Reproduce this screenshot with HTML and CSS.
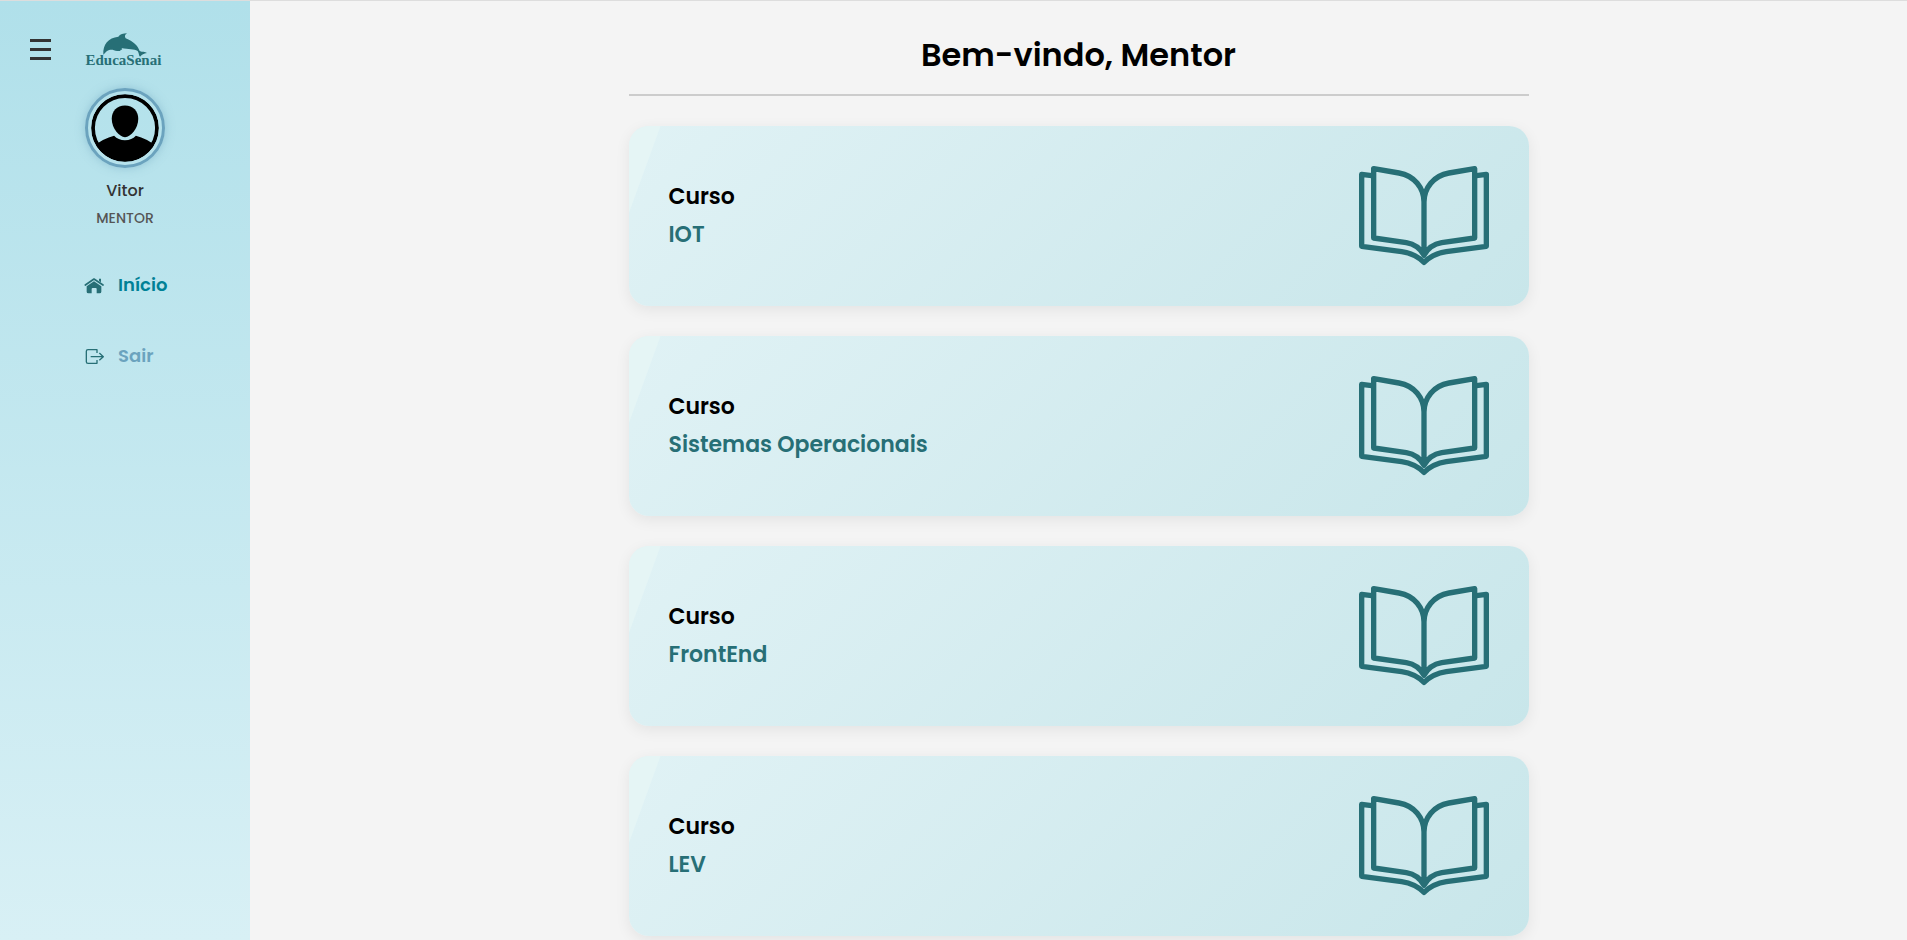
FILE: index.html
```html
<!DOCTYPE html>
<html lang="pt-BR">
<head>
<meta charset="utf-8">
<meta name="viewport" content="width=device-width, initial-scale=1">
<title>EducaSenai</title>
<link rel="stylesheet" href="styles.css">
</head>
<body>
<svg class="sprite" aria-hidden="true">
  <symbol id="book" viewBox="84 168 390 300">
    <g fill="none" stroke="currentColor" stroke-width="16" stroke-linejoin="round">
      <path d="M122 197 92 193V409L212 425Q252 431 279 457Q306 431 346 425L466 409V193L436 197"/>
      <path d="M279 436Q262 404 226 398L128 384V176L204 189C250 197 279 234 279 276C279 234 308 197 354 189L431 176V384L332 398Q296 404 279 436ZV260"/>
    </g>
  </symbol>
</svg>
<div class="layout">
  <aside class="sidebar">
    <header class="brand">
      <button class="menu" type="button" aria-label="Menu"><span></span><span></span><span></span></button>
      <a class="logo" href="#">
        <svg class="dolphin" viewBox="258 98 225 72" aria-hidden="true"><path fill="currentColor" d="M310 163C308 132 325 112 355 109C360 102 370 99 381 99C373 104 374 109 377 114C400 123 413 136 419 152C427 156 435 153 441 158C431 160 426 162 420 169C415 164 418 159 413 152C402 146 386 147 364 143C369 147 366 149 361 149C366 154 346 153 338 148C324 147 319 153 310 163Z"/></svg>
        <span>EducaSenai</span>
      </a>
    </header>
    <section class="profile">
      <svg class="avatar" viewBox="0 0 200 200" role="img" aria-label="Foto de perfil">
        <defs><clipPath id="face"><circle cx="100" cy="100" r="98"/></clipPath></defs>
        <circle cx="100" cy="100" r="94" fill="none" stroke="#000" stroke-width="11"/>
        <path d="M100 34C124 34 139 50 139 73C139 101 117 127 100 127C83 127 61 101 61 73C61 50 76 34 100 34Z"/>
        <path clip-path="url(#face)" d="M8 154Q36 131 68 123Q80 136 100 136Q120 136 132 123Q164 131 192 154V200H8Z"/>
      </svg>
      <p class="name">Vitor</p>
      <p class="role">MENTOR</p>
    </section>
    <nav class="nav">
      <a class="active" href="#">
        <svg viewBox="72 50 60 60" aria-hidden="true"><path d="M76 77 102 59 129 77" fill="none" stroke="currentColor" stroke-width="5" stroke-linecap="round" stroke-linejoin="round"/><path fill="currentColor" d="M117 58H123V69L117 65ZM80 81 102 66 124 81V97Q124 102 119 102H110V89Q110 86 107 86H98Q95 86 95 89V102H85Q80 102 80 97Z"/></svg>
        <span>Início</span>
      </a>
      <a href="#">
        <svg viewBox="73 261 60 60" aria-hidden="true"><path d="M112 279V269H85Q80 269 80 274V305Q80 310 85 310H112V300M93 290H131M119 279 131 290 119 301" fill="none" stroke="currentColor" stroke-width="4" stroke-linejoin="round"/></svg>
        <span>Sair</span>
      </a>
    </nav>
  </aside>
  <main class="content">
    <div class="courses">
      <h1>Bem-vindo, Mentor</h1>
      <a class="card" href="#"><h2>Curso<span>IOT</span></h2><svg class="book" aria-hidden="true"><use href="#book"/></svg></a>
      <a class="card" href="#"><h2>Curso<span>Sistemas Operacionais</span></h2><svg class="book" aria-hidden="true"><use href="#book"/></svg></a>
      <a class="card" href="#"><h2>Curso<span>FrontEnd</span></h2><svg class="book" aria-hidden="true"><use href="#book"/></svg></a>
      <a class="card" href="#"><h2>Curso<span>LEV</span></h2><svg class="book" aria-hidden="true"><use href="#book"/></svg></a>
    </div>
  </main>
</div>
</body>
</html>
```
FILE: styles.css
```css
* { box-sizing: border-box; margin: 0; padding: 0; }

body {
  border-top: 1px solid #ddd;
  background: #f4f4f4;
  color: #000;
  font-family: Poppins, Inter, "Open Sans", sans-serif;
}

a { color: inherit; text-decoration: none; }
.sprite { display: none; }

.layout { display: flex; min-height: calc(100vh - 1px); }

.sidebar {
  flex: 0 0 250px;
  background: linear-gradient(180deg, #b0e0ea, #d8f0f5);
}

.brand {
  display: grid;
  grid-template-columns: 1fr auto 1fr;
  padding: 32px 34px 0 30px;
}

.menu {
  display: flex;
  flex-direction: column;
  gap: 6px;
  width: 21px;
  padding-top: 6px;
  border: 0;
  background: none;
  cursor: pointer;
}
.menu span { width: 21px; height: 3px; background: #333; }

.logo {
  display: flex;
  flex-direction: column;
  width: 75px;
  color: #276f76;
  font: bold 15px/16px "Liberation Serif", serif;
}
.dolphin { display: block; width: 75px; height: 24px; margin-bottom: -5px; }

.profile {
  display: flex;
  flex-direction: column;
  align-items: center;
  padding-top: 20px;
  text-align: center;
}
.avatar {
  width: 80px;
  height: 80px;
  padding: 3px;
  border: 3px solid #6ba3be;
  border-radius: 50%;
  box-shadow: 0 0 10px rgba(107, 163, 190, 0.5);
}
.name { margin-top: 11px; color: #333; font-size: 16px; font-weight: 500; line-height: 24px; }
.role { margin-top: 5px; color: #555; font-size: 14px; font-weight: 500; line-height: 20px; }

.nav {
  display: flex;
  flex-direction: column;
  gap: 44px;
  padding: 43px 0 0 84px;
}
.nav a {
  display: flex;
  align-items: center;
  gap: 14px;
  color: #6ba3be;
  font-size: 18px;
  font-weight: 600;
  line-height: 27px;
}
.nav svg { width: 20px; height: 20px; margin-top: 2px; color: #276f76; }
.nav .active { color: #008196; }

.content { flex: 1; padding: 30px 20px 3px; }
.courses {
  display: flex;
  flex-direction: column;
  gap: 30px;
  max-width: 900px;
  margin: 0 auto;
}

h1 {
  padding-bottom: 15px;
  border-bottom: 2px solid #ccc;
  font-size: 32px;
  font-weight: 600;
  line-height: 48px;
  text-align: center;
}

.card {
  position: relative;
  display: flex;
  align-items: center;
  justify-content: space-between;
  padding: 40px;
  overflow: hidden;
  border-radius: 20px;
  background: linear-gradient(135deg, #e0f2f5, #c8e6ea);
  box-shadow: 0 4px 15px rgba(0, 0, 0, 0.07);
}
.card::before {
  position: absolute;
  top: 0;
  left: 0;
  width: 32px;
  height: 88px;
  background: #e5f5f5;
  clip-path: polygon(0 0, 100% 0, 0 100%);
  content: "";
}
h2 { font-size: 22px; font-weight: 600; line-height: 38px; }
h2 span { display: block; color: #276f76; }
.book { width: 130px; height: 100px; color: #276f76; }
```
